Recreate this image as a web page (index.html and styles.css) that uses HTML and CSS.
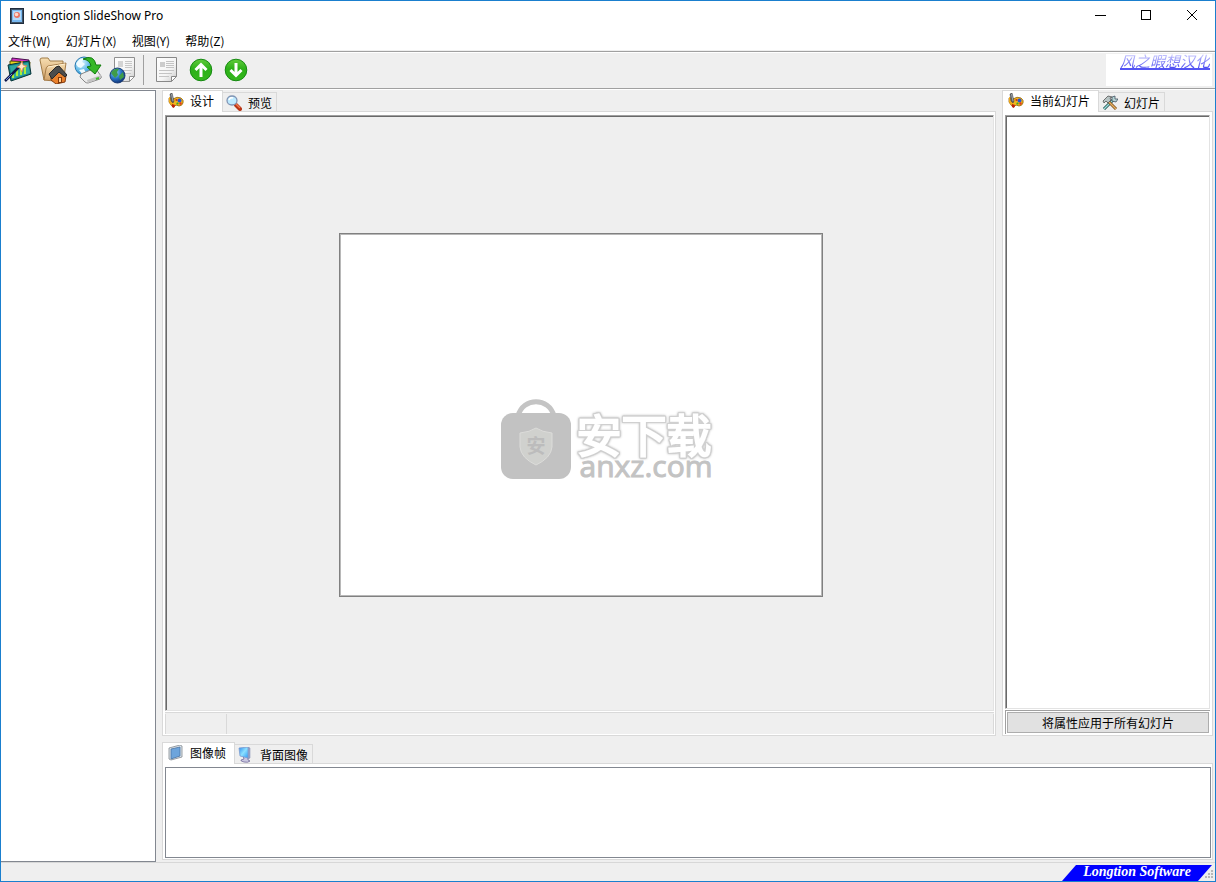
FILE: index.html
```html
<!DOCTYPE html>
<html lang="zh-CN">
<head>
<meta charset="utf-8">
<title>Longtion SlideShow Pro</title>
<link rel="stylesheet" href="styles.css">
</head>
<body>
<svg class="defs" aria-hidden="true">
  <defs>
    <linearGradient id="green" x1="0" y1="0" x2="0" y2="1"><stop offset="0" stop-color="#62cc3c"/><stop offset=".45" stop-color="#2cb018"/><stop offset="1" stop-color="#34b81c"/></linearGradient>
    <linearGradient id="paper" x1="0" y1="0" x2="1" y2="1"><stop offset="0" stop-color="#fff"/><stop offset=".6" stop-color="#f4f4f4"/><stop offset="1" stop-color="#c8c8c8"/></linearGradient>
    <linearGradient id="screen" x1="0" y1="0" x2="1" y2="1"><stop offset="0" stop-color="#2c8cf0"/><stop offset=".5" stop-color="#8ce0ff"/><stop offset="1" stop-color="#2c9cf8"/></linearGradient>
    <radialGradient id="globe" cx=".35" cy=".3" r=".8"><stop offset="0" stop-color="#90d4f8"/><stop offset=".5" stop-color="#2874c4"/><stop offset="1" stop-color="#0c2468"/></radialGradient>
    <radialGradient id="globe-light" cx=".35" cy=".3" r=".8"><stop offset="0" stop-color="#e0f8ff"/><stop offset=".6" stop-color="#5cb8e8"/><stop offset="1" stop-color="#1c78b8"/></radialGradient>
    <linearGradient id="folder" x1="0" y1="0" x2="0" y2="1"><stop offset="0" stop-color="#f6ddb0"/><stop offset="1" stop-color="#d0a068"/></linearGradient>
    <symbol id="palette" viewBox="0 0 16 16">
      <path d="M5 6q4-3 8-1 3 2 2 5-1 3-4 3l-3-1-2 2q-2 0-3-2L1 9V5z" fill="#efb61c" stroke="#94640c" stroke-width=".8"/>
      <path d="M1 4l2 1 2 6-2 1-2-3z" fill="#f0a818"/>
      <path d="M2 1l2-1 2 8-1 2-2-2z" fill="#606468" stroke="#34383c" stroke-width=".5"/><path d="M3.500 1L5 8" stroke="#b4b8bc" stroke-width=".8"/>
      <circle cx="11.500" cy="7.500" r="2" fill="#2456d8"/><circle cx="12.500" cy="10.500" r="1.200" fill="#e03820"/><circle cx="8.500" cy="7" r="1.100" fill="#d83018"/><circle cx="9.500" cy="10.500" r="1.100" fill="#38a828"/><path d="M4 11l3 1-1 3-2-1z" fill="#c01c0c"/>
    </symbol>
  </defs>
</svg>
<div class="window">
  <header class="titlebar">
    <svg class="app-icon" viewBox="0 0 14 16"><rect x=".5" y=".5" width="13" height="15" fill="#405468" stroke="#202c3c"/><rect x="2" y="2" width="10" height="12" fill="#78b8f0"/><rect x="3" y="3" width="8" height="9" fill="#b4dafa"/><circle cx="7" cy="7" r="3" fill="#ec7460"/><circle cx="6.500" cy="6.500" r="1.800" fill="#ffd8cc"/></svg>
    <h1 class="title">Longtion SlideShow Pro</h1>
    <div class="window-buttons">
      <button class="caption" aria-label="最小化"><svg viewBox="0 0 12 12"><path d="M1 5.500h11" /></svg></button>
      <button class="caption" aria-label="最大化"><svg viewBox="0 0 12 12"><rect x="1.500" y=".5" width="9" height="9"/></svg></button>
      <button class="caption" aria-label="关闭"><svg viewBox="0 0 12 12"><path d="M1 0l10 10M11 0L1 10"/></svg></button>
    </div>
  </header>
  <nav class="menu">
    <button>文件(W)</button><button>幻灯片(X)</button><button>视图(Y)</button><button>帮助(Z)</button>
  </nav>
  <div class="toolbar">
    <div class="tools">
      <button aria-label="新建"><svg viewBox="0 0 28 28">
        <path d="M8 2l17 2-1 11-17-4z" fill="#d030c8" stroke="#48104c"/><path d="M6 5l20 1-1 12-19-4z" fill="#e8d41c" stroke="#524c08"/>
        <path d="M4 9l21-4 2 13-20 7z" fill="#16848c" stroke="#083438"/><path d="M6 10l18-3 2 10-18 6z" fill="#30a8a0"/>
        <path d="M9 22v-6M13 20v-8M17 19v-6M21 18v-7" stroke="#a8f038" stroke-width="2"/><path d="M1 25L16 10" stroke="#101848" stroke-width="2.500"/><path d="M2 24l6-6" stroke="#6c88d8"/><path d="M18 5l1 4 4 1-4 2-1 4-2-4-3-1 3-2z" fill="#ffe8c8" stroke="#e87c3c" stroke-width=".7"/>
      </svg></button>
      <button aria-label="打开"><svg viewBox="0 0 28 28">
        <path d="M1 4q0-2 2-2h6l2 3h13v16l-19 3z" fill="url(#folder)" stroke="#a07c48"/><path d="M5 24l2-11q0-2 2-3l18-3-2 14-10 4z" fill="url(#folder)" stroke="#a47b48"/><path d="M9 11l17-3" stroke="#fff0d0"/>
        <path d="M12 18l7-6 8 8-1 6-9 2-5-4z" fill="#e9802c" stroke="#803a0c"/><path d="M10 18l7-7 3-1 8 9-2 2-6-5-7 7z" fill="#4c4c4c" stroke="#282828"/><path d="M19 21h4v6h-4z" fill="#81380c"/><path d="M20 22h2v4h-2z" fill="#ffcf90"/>
      </svg></button>
      <button aria-label="导出"><svg viewBox="0 0 28 28">
        <circle cx="10" cy="10" r="9" fill="url(#globe-light)" stroke="#2878b0"/><path d="M2 8q3-6 8-6l-2 4 3 2-4 4-3-1zM5 14l5-1 2 4-3 2z" fill="#f0fbff"/>
        <path d="M7 18l12-5q2-1 3 0l5 7q1 2-1 3l-12 4q-2 0-3-1l-5-5z" fill="#ececec" stroke="#888"/><path d="M13 24l14-5v3l-13 5z" fill="#c4c4c4"/><path d="M22 23l3-1" stroke="#3abf28" stroke-width="2"/>
        <path d="M9 3q11-5 13 6h5l-6 9-8-7 4-1q-1-6-8-7z" fill="#36b828" stroke="#127c0c"/>
      </svg></button>
      <button aria-label="发布网页"><svg viewBox="0 0 28 28">
        <path d="M5.500 1.500h20v19l-5 5h-15z" fill="url(#paper)" stroke="#909090"/><path d="M9 5h5v6H9z" fill="#d4d4d4"/><path d="M16 5.500h7M16 7.500h7M16 9.500h7M16 11.500h7M13 14.500h10M16 17.500h6" stroke="#c8c8c8"/><path d="M20.500 25.500v-5h5z" fill="#fff" stroke="#909090"/>
        <circle cx="8.500" cy="19.500" r="7.500" fill="url(#globe)" stroke="#173b74"/><path d="M2 17q3-5 8-4l-2 3 1 3-3 3zM10 20l4-4 1 5-4 3z" fill="#3f9c48"/>
      </svg></button>
      <span class="separator"></span>
      <button aria-label="属性"><svg viewBox="0 0 28 28">
        <path d="M4.500 1.500h20v19l-5 5h-15z" fill="url(#paper)" stroke="#888"/><path d="M8 6h5v5H8z" fill="#ccc"/><path d="M14 5.500h8M14 7.500h8M14 9.500h8M14 11.500h8M7 14.500h15M7 17.500h13M7 20.500h10" stroke="#c4c4c4"/><path d="M19.500 25.500v-5h5z" fill="#fff" stroke="#888"/>
      </svg></button>
      <button aria-label="上移"><svg viewBox="0 0 28 28"><circle cx="14" cy="14" r="10.800" fill="url(#green)" stroke="#168a12"/><path d="M14 21V8M8.500 14L14 8.500l5.500 5.500" fill="none" stroke="#fff" stroke-width="3"/></svg></button>
      <button aria-label="下移"><svg viewBox="0 0 28 28"><circle cx="14" cy="14" r="10.800" fill="url(#green)" stroke="#168a12"/><path d="M14 7v13M8.500 14l5.500 5.500 5.500-5.500" fill="none" stroke="#fff" stroke-width="3"/></svg></button>
    </div>
    <div class="credit"><a href="#">风之暇想汉化</a></div>
  </div>
  <main class="workspace">
    <aside class="slide-list" aria-label="幻灯片列表"></aside>
    <div class="editor">
      <div class="upper">
        <section class="tab-group design">
          <div class="tabs" role="tablist">
            <button class="tab active" role="tab" aria-selected="true"><svg><use href="#palette"/></svg>设计</button>
            <button class="tab" role="tab"><svg viewBox="0 0 16 16"><path d="M10 10l4 4" stroke="#b83414" stroke-width="4" stroke-linecap="round"/><path d="M10 9l4 4" stroke="#f4784c" stroke-width="1.500"/><ellipse cx="6" cy="5.500" rx="5" ry="4.500" fill="#bdeaff" stroke="#8094b4" stroke-width="1.300"/><path d="M3 5q1-3 4-2" stroke="#fff" fill="none" stroke-width="1.500"/></svg>预览</button>
          </div>
          <div class="page">
            <div class="canvas">
              <div class="slide">
                <div class="watermark">
                  <svg class="bag" viewBox="0 0 72 82"><path d="M18 17C23-2 49-2 54 17" fill="none" stroke="#c4c4c4" stroke-width="5"/><rect x="1" y="14" width="70" height="66" rx="12" fill="#c2c2c2"/><path d="M20 34q10-1 16-5 6 4 16 5v14q-1 11-16 18-15-7-16-18z" fill="#d0d1ce" stroke="#dcdcda"/><text class="bag-text" x="36" y="54" text-anchor="middle">安</text></svg>
                  <div class="brand"><span class="brand-name">安下载</span><span class="brand-site">anxz.com</span></div>
                </div>
              </div>
            </div>
            <div class="info"><span class="cell first"></span><span class="cell"></span></div>
          </div>
        </section>
        <section class="tab-group properties">
          <div class="tabs" role="tablist">
            <button class="tab active" role="tab" aria-selected="true"><svg><use href="#palette"/></svg>当前幻灯片</button>
            <button class="tab" role="tab"><svg viewBox="0 0 16 16"><path d="M2 14l9-9" stroke="#184848" stroke-width="3"/><path d="M2 14l9-9" stroke="#9de0dc" stroke-width="1.500"/><path d="M10 6V2l3-1v3h3l-2 3z" fill="#b5d4d4" stroke="#345" stroke-width=".7"/><path d="M6 6l8 8" stroke="#754c1c" stroke-width="3"/><path d="M6 6l8 8" stroke="#e8b060" stroke-width="1.500"/><path d="M1 6l5-5 4 1-2 1 1 2-3 3-2-2-2 2z" fill="#b8c4c4" stroke="#444" stroke-width=".7"/></svg>幻灯片</button>
          </div>
          <div class="page">
            <div class="property-box"></div>
            <div class="apply"><button>将属性应用于所有幻灯片</button></div>
          </div>
        </section>
      </div>
      <section class="tab-group frames">
        <div class="tabs" role="tablist">
          <button class="tab active" role="tab" aria-selected="true"><svg viewBox="0 0 16 16"><path d="M1 3l11-3 2 1v11L3 15l-2-1z" fill="#dde4ea" stroke="#80888f" stroke-width=".8"/><path d="M3 4l9-2v9l-9 3z" fill="#6ca4dc" stroke="#4a74a4" stroke-width=".8"/></svg>图像帧</button>
          <button class="tab" role="tab"><svg viewBox="0 0 16 16"><path d="M5 9l5 1v3l2 1q-2 2-6 1-4-1-3-2l3-1z" fill="#c9c7e1" stroke="#655d92" stroke-width=".7"/><path d="M10 0l2 1v10l-2 1z" fill="#9ca8cc" stroke="#7884ac" stroke-width=".5"/><path d="M1 1l9-1v11L2 9z" fill="url(#screen)" stroke="#7c9cd0" stroke-width=".8"/></svg>背面图像</button>
        </div>
        <div class="page"><div class="frame-list"></div></div>
      </section>
    </div>
  </main>
  <footer class="status"><span class="company">Longtion Software</span><svg class="grip" viewBox="0 0 10 10"><path d="M7 0h2v2H7zM4 3h2v2H4zM7 3h2v2H7zM1 6h2v2H1zM4 6h2v2H4zM7 6h2v2H7z" fill="#b8b8b8"/></svg></footer>
</div>
</body>
</html>
```

FILE: styles.css
```css
* { box-sizing: border-box; }
body { margin: 0; color: #000; font: 12px/16px "Noto Sans CJK SC", sans-serif; }
button { margin: 0; padding: 0; border: 0; background: none; color: inherit; font: inherit; white-space: nowrap; }
svg { display: block; flex: none; }
.defs { position: absolute; width: 0; height: 0; }
.window { display: flex; flex-direction: column; min-height: 100vh; border: 1px solid #1a7fce; background: #efefef; }

.titlebar { display: flex; align-items: center; height: 29px; padding-left: 9px; background: #fff; }
.app-icon { width: 14px; height: 16px; }
.title { margin: 0 auto 0 6px; font: 12px/16px "Noto Sans", sans-serif; }
.window-buttons { display: flex; }
.caption { display: grid; place-items: center; width: 46px; height: 29px; }
.caption svg { width: 12px; height: 12px; fill: none; stroke: #000; stroke-width: 1; }

.menu { display: flex; height: 20px; background: #fff; }
.menu button { padding: 1px 8px 0 7px; line-height: 19px; }

.toolbar { display: flex; align-items: center; justify-content: space-between; height: 39px; margin-top: 1px; padding: 0 3px 2px 0; border-top: 1px solid #a0a0a0; border-bottom: 1px solid #fff; box-shadow: inset 0 1px #fff, inset 0 -1px #a0a0a0; }
.tools { display: flex; align-items: center; margin-left: -1px; }
.tools button { display: grid; place-items: center; width: 35px; height: 32px; }
.tools svg { width: 28px; height: 28px; }
.separator { width: 1px; height: 30px; margin: 0 4px 0 3px; background: #a0a0a0; }
.credit { width: 106px; height: 32px; padding: 0 2px 0 14px; background: #fff; }
.credit a { display: block; border-bottom: 2px solid #5454f4; background: linear-gradient(#ccf, #4a4af0); background-clip: text; color: transparent; font-size: 15px; line-height: 14px; font-style: italic; text-decoration: none; white-space: nowrap; }

.workspace { display: flex; flex: 1; }
.slide-list { flex: none; width: 155px; border: 1px solid #828790; border-left: 0; background: #fff; }
.editor { display: flex; flex: 1; flex-direction: column; gap: 5px; min-width: 0; padding: 0 2px 2px 6px; }
.upper { display: flex; flex: 1; gap: 6px; }
.tab-group { display: flex; flex-direction: column; }
.design { flex: 1; }
.properties { flex: none; width: 211px; }
.tabs { display: flex; align-items: flex-end; height: 21px; }
.tab { display: flex; align-items: center; height: 19px; padding: 2px 4px 0 3px; border: 1px solid #d9d9d9; border-left: 0; border-bottom: 0; }
.tab svg { width: 16px; height: 16px; margin-right: 6px; }
.tab.active { position: relative; height: 22px; margin-bottom: -1px; padding: 0 8px 2px 5px; border: 1px solid #d9d9d9; border-bottom: 0; background: #fff; }
.page { display: flex; flex: 1; flex-direction: column; padding: 3px 1px 1px 2px; border: 1px solid #d9d9d9; background: #fff; }
.canvas { display: grid; flex: 1; place-items: center; padding: 4px 0 0 3px; border: 1px solid #e3e3e3; border-top-color: #a0a0a0; border-left-color: #a0a0a0; background: #efefef; box-shadow: inset 1px 1px #696969; }
.slide { display: grid; place-items: center; width: 484px; height: 364px; padding: 49px 0 0 50px; border: 1px solid #808080; background: #fff; box-shadow: inset 0 0 0 1px #b8b8b8; }
.watermark { display: flex; gap: 5px; color: #c3c3c3; }
.bag { width: 72px; height: 82px; }
.bag-text { fill: #bcbcbc; font-size: 19px; font-weight: 700; }
.brand { display: flex; flex-direction: column; padding-top: 12px; }
.brand-name { color: #fff; font-size: 45px; line-height: 45px; font-weight: 400; -webkit-text-stroke: 2px #fff; filter: drop-shadow(1px 0 #d0d0d0) drop-shadow(-1px 0 #d0d0d0) drop-shadow(0 1px #d0d0d0) drop-shadow(0 -1px #d0d0d0) drop-shadow(0 0 1px #c3c3c3); }
.brand-site { padding-left: 3px; font: 30px/20px "Open Sans", sans-serif; -webkit-text-stroke: 1px #c3c3c3; }
.info { display: flex; height: 22px; margin-top: 1px; border-top: 1px solid #d9d9d9; background: #efefef; }
.cell { flex: 1; margin-top: 1px; border-right: 1px solid #d9d9d9; }
.cell.first { flex: none; width: 62px; border-left: 1px solid #d9d9d9; }
.property-box { flex: 1; border: 1px solid #e3e3e3; border-top-color: #a0a0a0; border-left-color: #a0a0a0; box-shadow: inset 1px 1px #696969; }
.apply { margin-top: 1px; padding: 1px; border-top: 1px solid #a0a0a0; border-left: 1px solid #a0a0a0; }
.apply button { width: 100%; height: 21px; border: 1px solid #adadad; background: #e1e1e1; line-height: 19px; }
.properties .page { padding-right: 2px; }
.frames .page { flex: none; }
.frames .tabs { height: 22px; }
.frame-list { height: 91px; border: 1px solid #828790; }

.status { position: relative; display: flex; align-items: flex-end; justify-content: flex-end; height: 19px; padding-right: 3px; border-top: 1px solid #d7d7d7; }
.company { width: 150px; height: 16px; background: #00f; clip-path: polygon(14px 0, 100% 0, 136px 100%, 0 100%); color: #fff; font: italic bold 14px/14px "Liberation Serif", serif; text-align: center; }
.grip { position: absolute; right: 1px; bottom: 1px; width: 10px; height: 10px; }
```
